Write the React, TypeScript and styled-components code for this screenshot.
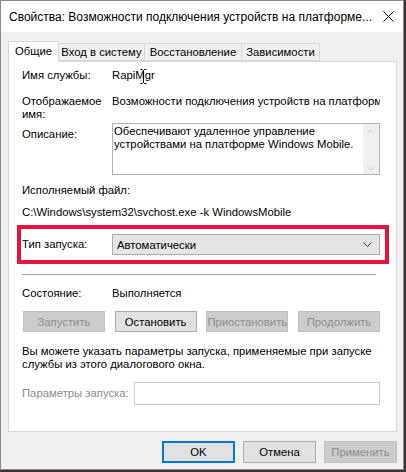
import React from 'react';
import styled, { createGlobalStyle } from 'styled-components';

const GlobalStyle = createGlobalStyle`
  html, body {
    margin: 0;
    padding: 0;
    background: #3b3236;
  }
  body {
    font-family: "Liberation Sans", Arial, sans-serif;
    font-size: 11.3px;
    color: #000;
  }
`;

const Window = styled.div`
  width: 404px;
  height: 470px;
  box-sizing: border-box;
  border: 1px solid #8a8a8a;
  background: #f0f0f0;
  display: flex;
  flex-direction: column;
`;

const TitleBar = styled.div`
  height: 31px;
  background: #fff;
  display: flex;
  align-items: center;
  justify-content: space-between;
  padding: 0 9px 0 8px;
`;

const Title = styled.span`
  font-size: 12px;
  white-space: nowrap;
`;

const Body = styled.div`
  flex: 1;
  display: flex;
  flex-direction: column;
  padding: 9px 6px 0 7px;
`;

const TabStrip = styled.div`
  display: flex;
  align-items: flex-end;
  height: 20px;
  position: relative;
  z-index: 1;
`;

const Tab = styled.div<{ $active?: boolean; $w: number }>`
  box-sizing: border-box;
  width: ${p => p.$w}px;
  height: ${p => (p.$active ? '21px' : '18px')};
  padding-bottom: ${p => (p.$active ? '2px' : '0')};
  margin-bottom: ${p => (p.$active ? '-1px' : '0')};
  display: flex;
  align-items: center;
  justify-content: center;
  background: ${p => (p.$active ? '#fff' : '#f0f0f0')};
  border: 1px solid #d9d9d9;
  border-bottom: ${p => (p.$active ? 'none' : '1px solid #d9d9d9')};
  margin-left: ${p => (p.$active ? '0' : '-1px')};
  white-space: nowrap;
`;

const Panel = styled.div`
  height: 371px;
  box-sizing: border-box;
  background: #fff;
  border: 1px solid #d9d9d9;
  padding: 6px 16px 0 13px;
  display: flex;
  flex-direction: column;
`;

const Row = styled.div<{ $top?: number }>`
  display: grid;
  grid-template-columns: 90px 1fr;
  align-items: start;
  margin-top: ${p => p.$top ?? 0}px;
  line-height: 15px;
`;

const Label = styled.span<{ $disabled?: boolean; $pad?: number; $lh?: number }>`
  color: ${p => (p.$disabled ? '#8c8c8c' : '#000')};
  padding-top: ${p => p.$pad ?? 0}px;
  line-height: ${p => p.$lh ?? 15}px;
  white-space: nowrap;
`;

const Value = styled.span<{ $lh?: number }>`
  white-space: nowrap;
  overflow: hidden;
  position: relative;
  line-height: ${p => p.$lh ?? 15}px;
`;

const Line = styled.div<{ $top?: number }>`
  margin-top: ${p => p.$top ?? 0}px;
  line-height: 15px;
  white-space: nowrap;
`;

const TextBox = styled.div`
  height: 52px;
  box-sizing: border-box;
  border: 1px solid #b4b4b4;
  display: flex;
  line-height: 13px;
`;

const TextBoxText = styled.div`
  flex: 1;
  padding: 1px 0 0 1px;
  white-space: nowrap;
`;

const ScrollBar = styled.div`
  width: 16px;
  background: #f0f0f0;
  display: flex;
  flex-direction: column;
  justify-content: space-between;
  align-items: center;
  padding: 5px 0 3px;
`;

const Highlight = styled.div`
  border: 4px solid #e8123f;
  margin: 5px -9px 0 -5px;
  padding: 5px 5px 5px 1px;
`;

const SelectRow = styled.div`
  display: grid;
  grid-template-columns: 90px 1fr;
  align-items: center;
`;

const Select = styled.div`
  height: 21px;
  box-sizing: border-box;
  background: #e5e5e5;
  border: 1px solid #acacac;
  display: flex;
  align-items: center;
  justify-content: space-between;
  padding: 0 7px 0 4px;
`;

const Separator = styled.div`
  height: 1px;
  background: #a0a0a0;
  margin: 10px 4px 0 0;
`;

const ButtonRow = styled.div`
  display: flex;
  justify-content: space-between;
  margin-top: 10px;
  padding-left: 1px;
`;

const Button = styled.div<{ $disabled?: boolean; $default?: boolean; $w?: number; $h?: number }>`
  width: ${p => p.$w ?? 82}px;
  height: ${p => p.$h ?? 21}px;
  box-sizing: border-box;
  display: flex;
  align-items: center;
  justify-content: center;
  background: ${p => (p.$disabled ? '#cccccc' : '#e1e1e1')};
  border: ${p =>
    p.$default ? '2px solid #0078d7' : p.$disabled ? '1px solid #bfbfbf' : '1px solid #adadad'};
  color: ${p => (p.$disabled ? '#8f8f8f' : '#000')};
  white-space: nowrap;
`;

const Note = styled.div`
  margin-top: 13px;
  line-height: 13px;
  white-space: nowrap;
`;

const ParamRow = styled.div`
  display: flex;
  align-items: center;
  gap: 5px;
  margin-top: 11px;
`;

const Input = styled.div`
  flex: 1;
  height: 23px;
  box-sizing: border-box;
  border: 1px solid #cccccc;
  background: #fff;
`;

const Footer = styled.div`
  display: flex;
  justify-content: flex-end;
  gap: 8px;
  margin-top: 9px;
`;

const Cursor = styled.svg`
  position: absolute;
  left: 28px;
  top: 1px;
`;

const Chevron = ({ dir, color, w = 9 }: { dir: 'up' | 'down'; color: string; w?: number }) => (
  <svg width={w} height={5} viewBox="0 0 9 5">
    <path d={dir === 'down' ? 'M0.5 0.5 L4.5 4.5 L8.5 0.5' : 'M0.5 4.5 L4.5 0.5 L8.5 4.5'} fill="none" stroke={color} strokeWidth="1" />
  </svg>
);

export default function App() {
  return (
    <>
      <GlobalStyle />
      <Window>
        <TitleBar>
          <Title>Свойства: Возможности подключения устройств на платформе...</Title>
          <svg width="11" height="11" viewBox="0 0 11 11">
            <path d="M0.5 0.5 L10.5 10.5 M10.5 0.5 L0.5 10.5" stroke="#000" strokeWidth="1" />
          </svg>
        </TitleBar>
        <Body>
          <TabStrip>
            <Tab $active $w={51}>Общие</Tab>
            <Tab $w={87}>Вход в систему</Tab>
            <Tab $w={98}>Восстановление</Tab>
            <Tab $w={79}>Зависимости</Tab>
          </TabStrip>
          <Panel>
            <Row>
              <Label>Имя службы:</Label>
              <Value style={{ overflow: 'visible' }}>
                RapiMgr
                <Cursor width="7" height="15" viewBox="0 0 7 15">
                  <path d="M0.5 0.5 H2.5 L3.5 1.5 L4.5 0.5 H6.5 M3.5 1.5 V13.5 M0.5 14.5 H2.5 L3.5 13.5 L4.5 14.5 H6.5" fill="none" stroke="#000" strokeWidth="1" />
                </Cursor>
              </Value>
            </Row>
            <Row $top={12}>
              <Label $lh={13}>
                Отображаемое
                <br />
                имя:
              </Label>
              <Value $lh={13}>Возможности подключения устройств на платформе Windows Mobile</Value>
            </Row>
            <Row $top={2}>
              <Label $pad={5} $lh={13}>Описание:</Label>
              <TextBox>
                <TextBoxText>
                  Обеспечивают удаленное управление
                  <br />
                  устройствами на платформе Windows Mobile.
                </TextBoxText>
                <ScrollBar>
                  <Chevron dir="up" color="#c2c2c2" w={8} />
                  <Chevron dir="down" color="#c2c2c2" w={8} />
                </ScrollBar>
              </TextBox>
            </Row>
            <Line $top={8}>Исполняемый файл:</Line>
            <Line $top={7}>C:\Windows\system32\svchost.exe -k WindowsMobile</Line>
            <Highlight>
              <SelectRow>
                <Label>Тип запуска:</Label>
                <Select>
                  <span>Автоматически</span>
                  <Chevron dir="down" color="#333" />
                </Select>
              </SelectRow>
            </Highlight>
            <Separator />
            <Row $top={11}>
              <Label>Состояние:</Label>
              <Value>Выполняется</Value>
            </Row>
            <ButtonRow>
              <Button $disabled>Запустить</Button>
              <Button>Остановить</Button>
              <Button $disabled>Приостановить</Button>
              <Button $disabled>Продолжить</Button>
            </ButtonRow>
            <Note>
              Вы можете указать параметры запуска, применяемые при запуске
              <br />
              службы из этого диалогового окна.
            </Note>
            <ParamRow>
              <Label $disabled>Параметры запуска:</Label>
              <Input />
            </ParamRow>
          </Panel>
          <Footer>
            <Button $default $w={73} $h={22}>OK</Button>
            <Button $w={73} $h={22}>Отмена</Button>
            <Button $disabled $w={73} $h={22}>Применить</Button>
          </Footer>
        </Body>
      </Window>
    </>
  );
}
